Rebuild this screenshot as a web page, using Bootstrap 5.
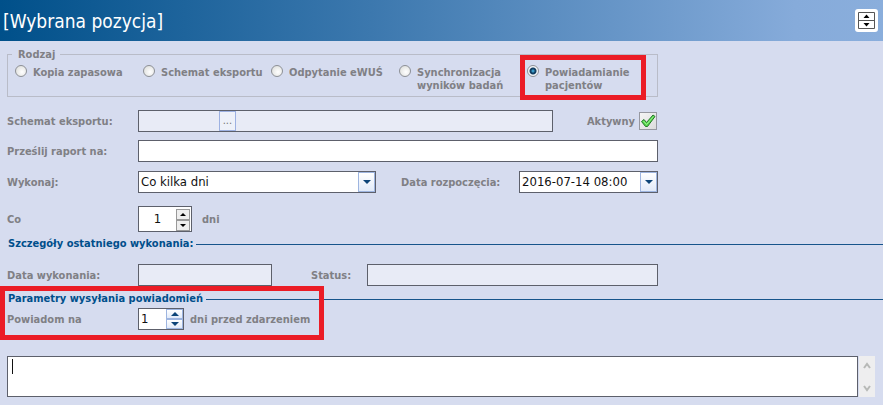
<!DOCTYPE html>
<html lang="pl">
<head>
<meta charset="utf-8">
<meta name="viewport" content="width=device-width, initial-scale=1">
<title>Wybrana pozycja</title>
<link href="https://cdn.jsdelivr.net/npm/bootstrap@5.3.0/dist/css/bootstrap.min.css" rel="stylesheet">
<style>
body{background:#d6dcef;color:#808085;font:bold 11px/13px "DejaVu Sans Condensed","Noto Sans",sans-serif}
.topbar{height:41px;padding:0 5px 0 3px;background:linear-gradient(90deg,#00508a,#3c78ae 42%,#86abda 90%,#8aaedc);color:#fff}
.topbar h1{font-size:19px;line-height:24px;font-weight:400}
.toggler{width:23px;height:23px;border:0;border-radius:3px;background:#fff}
.form-area{max-width:658px;padding-left:7px}
.kinds-frame{height:49px;margin-top:7px}
.kinds-frame fieldset{border:1px solid #b9bcc8;height:49px;padding:0 7px;margin:0}
.kinds-frame legend{float:none;width:auto;font-size:11px;line-height:13px;margin:0 0 0 -3px;padding:0 5px 0 6px}
.kind-grid{display:grid;grid-template-columns:repeat(4,128px) 1fr;margin-top:4px}
.kind{display:flex;align-items:flex-start;gap:6px;position:relative;white-space:nowrap}
.kind input{appearance:none;flex:none;width:12px;height:12px;margin:0;border:1px solid #8d9096;border-radius:50%;background:radial-gradient(circle at 60% 60%,#fff,#d8d9d6)}
.kind input:checked{background:radial-gradient(circle,#3a9bc8 0 1px,#123f63 2px 3px,#f4f6f8 4px)}
.kind-text{padding-top:1px}
.marker{position:absolute;border:5px solid #eb1c26;pointer-events:none}
.marker-kind{inset:-10px 4px -8px -7px}
.marker-params{inset:-6px auto -10px 0;width:324px}
.line-row{display:flex;align-items:center}
.lab{flex:0 0 131px}
.box{border:1px solid #5d606b;background:#fff;height:22px;color:#111;font-size:13px;font-weight:400;line-height:16px;border-radius:0;padding:0 3px;min-width:0}
.box.off{background:#e8ebf6}
.group{display:flex;padding:0}
.group input,.group select{appearance:none;border:0;background:transparent;flex:1 1 0;min-width:0;width:0;padding:0 2px;color:#111;font-size:13px;line-height:18px}
.drop{width:17px;border:1px solid #9eb5e0;background:linear-gradient(#fff,#e1eaf9);padding:0;display:grid;place-items:center}
.dots{width:17px;border:1px solid #9db1e2;background:#eef1f9;color:#777;font-size:11px;line-height:16px;padding:0}
.rest{flex:0 0 316px}
.spin{width:54px;height:26px}
.steps{display:flex;flex-direction:column}
.steps button{flex:1;display:grid;place-items:center;padding:0;border:1px solid #999;background:#eee;width:14px}
.steps.gray{padding:2px 1px 0 0}
.steps.blue button{width:17px;border-color:#9eb5e0;background:linear-gradient(#fff,#e1eaf9)}
.tick{display:grid;width:18px;height:18px;margin-right:1px}
.tick>*{grid-area:1/1}
.tick input{appearance:none;margin:0;width:18px;height:18px;border:1px solid #9698a0;background:linear-gradient(135deg,#f5f5f5,#dcdcdc)}
.tick svg{pointer-events:none}
.active-lab{margin:0 4px 0 34px}
.start-lab{margin-left:25px;flex:0 0 118px}
.start{flex:0 0 139px}
.row-gap-lg{margin-top:13px}
.row-gap-md{margin-top:9px}
.unit{margin-left:10px}
.section-title{display:flex;align-items:center;gap:3px;color:#004f8b;padding-left:8px;margin:0;font-size:11px;line-height:14px;font-weight:700}
.section-title::after{content:"";height:1px;background:#17548b;flex:1}
.last-run{margin-top:5px}
.done{flex:0 0 134px}
.status-lab{margin-left:39px;flex:0 0 56px}
.params{margin-top:6px}
.notify-row{margin-top:2px}
.notify{width:46px}
.after{margin-left:6px}
.notes{padding:0 8px 0 7px;margin-top:26px}
.notes textarea{height:41px;resize:none;flex:1;overflow:hidden}
.caret{position:absolute;left:5px;top:3px;width:1px;height:15px;background:#111}
.scroller{width:16px;margin-left:1px;background:#eeeeef}
.scroller button{border:0;background:none;padding:0;height:18px;width:16px;display:grid;place-items:center}
</style>
<script src="https://cdn.jsdelivr.net/npm/bootstrap@5.3.0/dist/js/bootstrap.bundle.min.js"></script>
</head>
<body>
<header class="topbar d-flex align-items-center justify-content-between">
  <h1 class="m-0">[Wybrana pozycja]</h1>
  <button class="toggler p-0 d-grid" type="button" aria-label="Zwiń lub rozwiń">
    <svg class="m-auto" width="19" height="19" viewBox="0 0 19 19"><path d="M1.500 1.500h16v16h-16z" fill="#fff" stroke="#555"/><path d="M1 9.500h17" stroke="#555"/><path d="M6.500 7l3-3.500 3 3.500zM6.500 12l3 3.500 3-3.500z" fill="#000"/></svg>
  </button>
</header>
<form>
  <div class="form-area">
    <div class="kinds-frame">
      <fieldset>
        <legend>Rodzaj</legend>
        <div class="kind-grid">
          <label class="kind"><input type="radio" name="kind"><span class="kind-text">Kopia zapasowa</span></label>
          <label class="kind"><input type="radio" name="kind"><span class="kind-text">Schemat eksportu</span></label>
          <label class="kind"><input type="radio" name="kind"><span class="kind-text">Odpytanie eWUŚ</span></label>
          <label class="kind"><input type="radio" name="kind"><span class="kind-text">Synchronizacja<br>wyników badań</span></label>
          <label class="kind"><input type="radio" name="kind" checked><span class="kind-text">Powiadamianie<br>pacjentów</span><span class="marker marker-kind"></span></label>
        </div>
      </fieldset>
    </div>

    <div class="line-row row-gap-lg">
      <label class="lab" for="scheme">Schemat eksportu:</label>
      <div class="box off group flex-fill"><input id="scheme" disabled><button class="dots" type="button">...</button><span class="rest"></span></div>
      <label class="active-lab" for="active">Aktywny</label>
      <span class="tick"><input id="active" type="checkbox" checked><svg width="18" height="18" viewBox="0 0 18 18"><path d="M2.500 9.500L5 7.500 7.500 10.500 14 3l2 1.500L8.500 14.500H6.500z" fill="#55d84b" stroke="#24772a" stroke-linejoin="round"/><path d="M4.500 9l3 3.500L14.500 4.500" fill="none" stroke="#9bf28d"/></svg></span>
    </div>
    <div class="line-row mt-2">
      <label class="lab" for="mail">Prześlij raport na:</label>
      <input id="mail" class="box flex-fill">
    </div>
    <div class="line-row row-gap-md">
      <label class="lab" for="run">Wykonaj:</label>
      <div class="box group flex-fill"><select id="run"><option>Co kilka dni</option></select><button class="drop" type="button" aria-label="Rozwiń"><svg width="8" height="4"><path d="M0 0h8L4 4z" fill="#0c4478"/></svg></button></div>
      <label class="start-lab" for="start">Data rozpoczęcia:</label>
      <div class="box group start"><input id="start" value="2016-07-14 08:00"><button class="drop" type="button" aria-label="Kalendarz"><svg width="8" height="4"><path d="M0 0h8L4 4z" fill="#0c4478"/></svg></button></div>
    </div>
    <div class="line-row row-gap-lg">
      <label class="lab" for="every">Co</label>
      <div class="box group spin"><input id="every" class="text-center" value="1"><div class="steps gray"><button type="button" aria-label="Więcej"><svg width="6" height="3"><path d="M0 3h6L3 0z"/></svg></button><button type="button" aria-label="Mniej"><svg width="6" height="3"><path d="M0 0h6L3 3z"/></svg></button></div></div>
      <span class="unit">dni</span>
    </div>
  </div>

  <h2 class="section-title last-run">Szczegóły ostatniego wykonania:</h2>
  <div class="form-area line-row row-gap-lg">
    <label class="lab" for="done">Data wykonania:</label>
    <input id="done" class="box off done" disabled>
    <label class="status-lab" for="status">Status:</label>
    <input id="status" class="box off flex-fill" disabled>
  </div>

  <section class="position-relative params">
    <h2 class="section-title">Parametry wysyłania powiadomień</h2>
    <div class="form-area line-row notify-row">
      <label class="lab" for="notify">Powiadom na</label>
      <div class="box group notify"><input id="notify" value="1"><div class="steps blue"><button type="button" aria-label="Więcej"><svg width="8" height="4"><path d="M0 4h8L4 0z" fill="#0c4478"/></svg></button><button type="button" aria-label="Mniej"><svg width="8" height="4"><path d="M0 0h8L4 4z" fill="#0c4478"/></svg></button></div></div>
      <span class="after">dni przed zdarzeniem</span>
    </div>
    <span class="marker marker-params"></span>
  </section>

  <div class="notes d-flex">
    <div class="position-relative d-flex flex-fill"><textarea class="box" aria-label="Treść"></textarea><span class="caret"></span></div>
    <div class="scroller d-flex flex-column justify-content-between">
      <button type="button" aria-label="W górę"><svg width="8" height="7" viewBox="0 0 8 7"><path d="M1 6l3-4 3 4" fill="none" stroke="#b7b9b7" stroke-width="2"/></svg></button>
      <button type="button" aria-label="W dół"><svg width="8" height="7" viewBox="0 0 8 7"><path d="M1 1l3 4 3-4" fill="none" stroke="#b7b9b7" stroke-width="2"/></svg></button>
    </div>
  </div>
</form>
</body>
</html>
